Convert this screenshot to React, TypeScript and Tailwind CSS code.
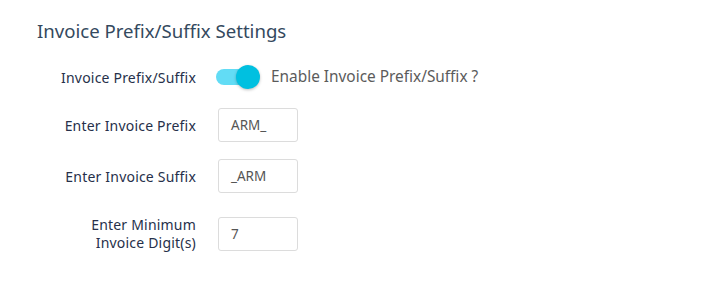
import React from "react";

export default function App() {
  const font = { fontFamily: '"Noto Sans", "Open Sans", sans-serif' };
  const label = "w-[159px] text-right text-[14px] tracking-[0.2px] text-[#26304a]";
  const input =
    "ml-[22px] w-[80px] h-[34px] border border-[#dcdcdc] rounded-[3px] flex items-center pl-[12px] text-[13.5px] text-[#555]";
  return (
    <div className="w-[717px] h-[284px] bg-white" style={font}>
      <div className="pl-[37px] pt-[18px]">
        <h2 className="text-[18.6px] leading-[26px] text-[#34495e] font-normal">
          Invoice Prefix/Suffix Settings
        </h2>
        <div className="flex items-center mt-[21px] h-[24px]">
          <div className={label}>Invoice Prefix/Suffix</div>
          <div className="ml-[20px] relative w-[44px] h-[24px] flex items-center">
            <div className="w-[36px] h-[16px] rounded-full bg-[#62dcf5]" />
            <div className="absolute right-0 top-0 w-[24px] h-[24px] rounded-full bg-[#00c0e0] shadow-[0_1px_3px_rgba(0,0,0,0.25)]" />
          </div>
          <div className="ml-[11px] text-[15.4px] text-[#5b5b5b]">Enable Invoice Prefix/Suffix ?</div>
        </div>
        <div className="flex items-center mt-[19px]">
          <div className={label}>Enter Invoice Prefix</div>
          <div className={input}>ARM_</div>
        </div>
        <div className="flex items-center mt-[17px]">
          <div className={label}>Enter Invoice Suffix</div>
          <div className={input}>_ARM</div>
        </div>
        <div className="flex items-center mt-[23px]">
          <div className={label + " leading-[18px]"}>
            Enter Minimum
            <br />
            Invoice Digit(s)
          </div>
          <div className={input}>7</div>
        </div>
      </div>
    </div>
  );
}
